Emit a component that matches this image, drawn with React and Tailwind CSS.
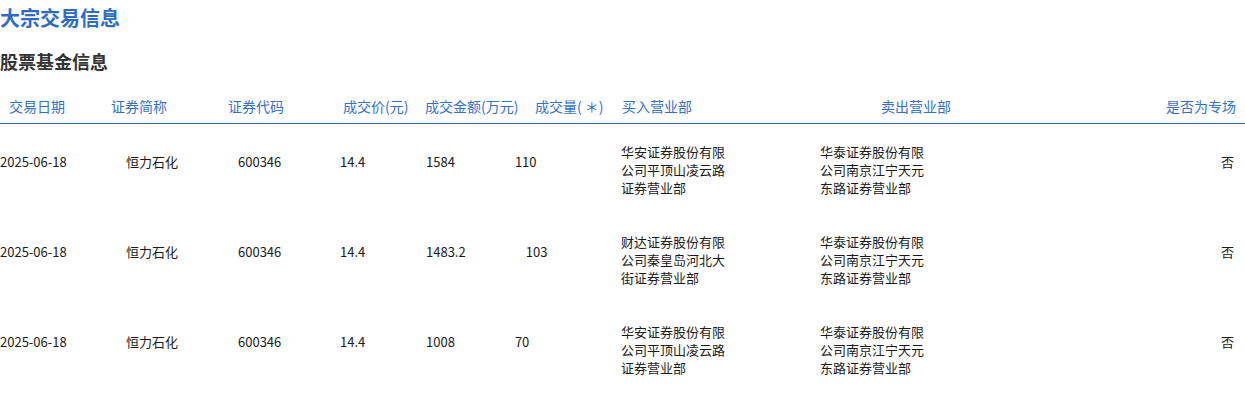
const rows = [
  {
    date: '2025-06-18',
    name: '恒力石化',
    code: '600346',
    price: '14.4',
    amount: '1584',
    volume: '110',
    buy: ['华安证券股份有限', '公司平顶山凌云路', '证券营业部'],
    sell: ['华泰证券股份有限', '公司南京江宁天元', '东路证券营业部'],
    special: '否',
  },
  {
    date: '2025-06-18',
    name: '恒力石化',
    code: '600346',
    price: '14.4',
    amount: '1483.2',
    volume: '103',
    buy: ['财达证券股份有限', '公司秦皇岛河北大', '街证券营业部'],
    sell: ['华泰证券股份有限', '公司南京江宁天元', '东路证券营业部'],
    special: '否',
  },
  {
    date: '2025-06-18',
    name: '恒力石化',
    code: '600346',
    price: '14.4',
    amount: '1008',
    volume: '70',
    buy: ['华安证券股份有限', '公司平顶山凌云路', '证券营业部'],
    sell: ['华泰证券股份有限', '公司南京江宁天元', '东路证券营业部'],
    special: '否',
  },
];

const font = { fontFamily: '"Noto Sans CJK SC", "Noto Sans", sans-serif' };

export default function App() {
  return (
    <div className="w-[1245px] h-[394px] bg-white overflow-hidden" style={font}>
      <h1 className="text-[20px] leading-[36px] font-bold text-[#2d6bc7]">大宗交易信息</h1>
      <h2 className="mt-[11px] text-[18px] leading-[28px] font-bold text-[#333333]">股票基金信息</h2>

      <div className="mt-[15px] flex h-[34px] items-center border-b border-[#2f64bd] text-[14px] text-[#3571c9]">
        <div className="w-[111px] pl-[9px]">交易日期</div>
        <div className="w-[117px]">证券简称</div>
        <div className="w-[115px]">证券代码</div>
        <div className="w-[82px]">成交价(元)</div>
        <div className="w-[110px]">成交金额(万元)</div>
        <div className="w-[87px]">成交量( ＊)</div>
        <div className="w-[259px]">买入营业部</div>
        <div className="flex-1">卖出营业部</div>
        <div className="pr-[9px]">是否为专场</div>
      </div>

      {rows.map((r, i) => (
        <div key={i} className="flex h-[90px] pt-[19px] text-[13px] leading-[18px] text-[#1a1a1a]">
          <div className="w-[126px] pt-[10px]">{r.date}</div>
          <div className="w-[112px] pt-[10px]">{r.name}</div>
          <div className="w-[102px] pt-[10px]">{r.code}</div>
          <div className="w-[86px] pt-[10px]">{r.price}</div>
          <div className="w-[195px] flex gap-[60px] pt-[10px]">
            <span>{r.amount}</span>
            <span>{r.volume}</span>
          </div>
          <div className="w-[199px]">
            {r.buy.map((l) => (
              <div key={l}>{l}</div>
            ))}
          </div>
          <div className="flex-1">
            {r.sell.map((l) => (
              <div key={l}>{l}</div>
            ))}
          </div>
          <div className="pr-[11px] pt-[10px]">{r.special}</div>
        </div>
      ))}
    </div>
  );
}
